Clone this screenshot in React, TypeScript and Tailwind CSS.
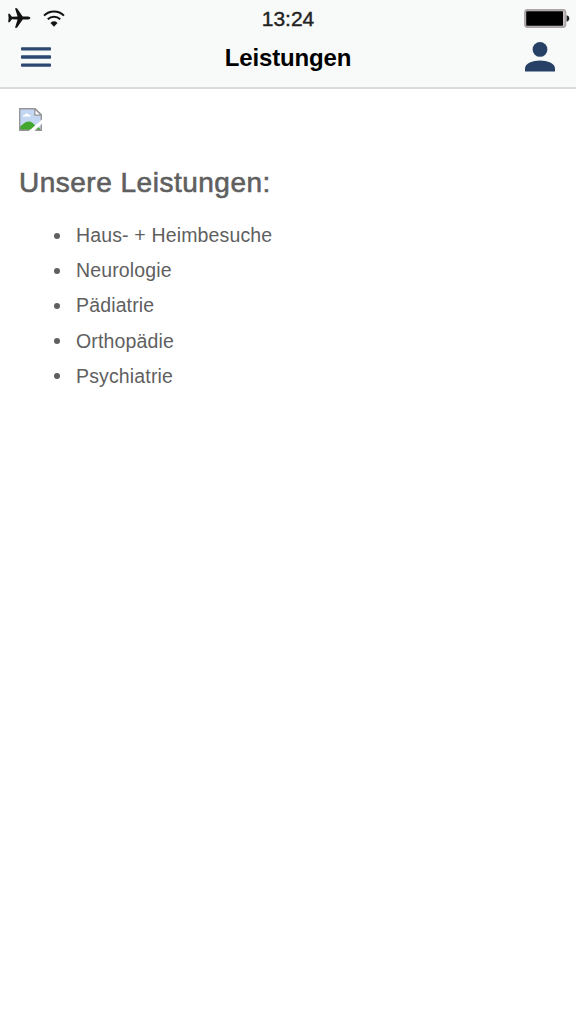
import React from "react";

const services = [
  "Haus- + Heimbesuche",
  "Neurologie",
  "Pädiatrie",
  "Orthopädie",
  "Psychiatrie",
];

const StatusBar = () => {
  return (
    <div className="grid h-[37px] grid-cols-3 items-center pl-2 pr-[6px]">
      <div className="flex items-center gap-3 pb-px">
        {/* Airplane mode */}
        <svg width="23" height="20" viewBox="0 0 23 20" fill="#111">
          <path d="M22.3 10c0-.9-1-1.3-2.2-1.4l-5.4-.2L9 .2H7l2.6 8.2-5.7.3-2.3-2.9H.2L.6 10 .2 14.2h1.4l2.3-2.9 5.7.3L7 19.8h2l5.7-8.2 5.4-.2c1.2-.1 2.2-.5 2.2-1.4z" />
        </svg>
        {/* Wifi */}
        <svg width="22" height="17" viewBox="0 0 22 17" fill="none" stroke="#111">
          <path d="M1 5.6a14.2 14.2 0 0 1 20 0" strokeWidth="2" />
          <path d="M4.8 9.2a8.9 8.9 0 0 1 12.4 0" strokeWidth="2" />
          <path d="M11 16.4l-3.3-3.5a4.7 4.7 0 0 1 6.6 0z" fill="#111" stroke="#111" strokeWidth="0.4" />
        </svg>
      </div>
      <span className="-ml-[2px] text-center text-[21px] leading-none text-[#222] [-webkit-text-stroke:0.4px_#222]">
        13:24
      </span>
      <div className="flex items-center justify-end">
        <svg width="46" height="19" viewBox="0 0 46 19">
          <rect x="0.9" y="0.9" width="40.6" height="17.2" rx="2.6" fill="#c9c4c4" stroke="#aaa3a3" strokeWidth="1.6" />
          <rect x="2.2" y="2.3" width="36.8" height="14.4" rx="0.8" fill="#000" />
          <path d="M42.6 6.3c1.7.3 2.7 1.5 2.7 3.2s-1 2.9-2.7 3.2z" fill="#222" />
        </svg>
      </div>
    </div>
  );
};

const Header = () => {
  return (
    <header className="h-[89px] border-b-2 border-[#dadbdb] bg-[#f8faf9]">
      <StatusBar />
      <div className="grid h-10 grid-cols-3 items-center px-[21px]">
        <button className="w-fit" aria-label="Menü">
          <svg width="30" height="21" viewBox="0 0 30 21" fill="#2c4770">
            <rect width="30" height="3.4" y="0.2" rx="0.8" />
            <rect width="30" height="3.4" y="8.3" rx="0.8" />
            <rect width="30" height="3.4" y="16.4" rx="0.8" />
          </svg>
        </button>
        <h1 className="pt-[2px] text-center text-2xl font-bold leading-none tracking-[-0.15px] text-black">
          Leistungen
        </h1>
        <button className="ml-auto w-fit" aria-label="Profil">
          <svg width="30" height="30" viewBox="0 0 30 30" fill="#274066">
            <circle cx="15" cy="7.4" r="7.4" />
            <path d="M0 29.6v-3.2c0-5.2 7.6-8 15-8s15 2.8 15 8v3.2z" />
          </svg>
        </button>
      </div>
    </header>
  );
};

const BrokenImage = () => {
  return (
    <svg width="23" height="23" viewBox="0 0 23 23">
      <path d="M.8.8h15.4l6 6v15.4H.8z" fill="#c3d6f2" />
      <path d="M3.8 8.6c0-1.4 1.2-2 2.1-1.7.3-2 3.4-2 3.8 0 1.2-.2 2 .6 2 1.7z" fill="#fff" />
      <path d="M.8 22.2v-3.4C4 16.5 6.2 13.6 9.6 13.6c3 0 5 2.1 6.4 3.8 2 0 4.5 2.4 6.2 4.8z" fill="#43a72f" />
      <path d="M.7 22.3V.7h15.4l6.2 6.1v15.5z" fill="none" stroke="#96969a" strokeWidth="1.4" />
      <path d="M15.8.8v6.3h6.4z" fill="#fff" stroke="#96969a" strokeWidth="1.3" />
      <path d="M23 11.6v4.1L15.4 23H9.8z" fill="#fff" />
    </svg>
  );
};

const App = () => {
  return (
    <div className="min-h-screen bg-white font-['Liberation_Sans',Arial,sans-serif]">
      <Header />
      <main className="px-[19px] pt-[19px] text-[#5f5f5f]">
        <BrokenImage />
        <h2 className="mt-9 text-[28px] leading-8 tracking-[0.5px] [-webkit-text-stroke:0.6px_#5f5f5f]">
          Unsere Leistungen:
        </h2>
        <ul className="mt-[19px] pl-[35px]">
          {services.map((service) => (
            <li
              key={service}
              className="flex h-[35.2px] items-center gap-4 text-[19.5px] tracking-[0.15px]"
            >
              <span className="size-[6px] rounded-full bg-[#5f5f5f]" />
              {service}
            </li>
          ))}
        </ul>
      </main>
    </div>
  );
};

export default App;
